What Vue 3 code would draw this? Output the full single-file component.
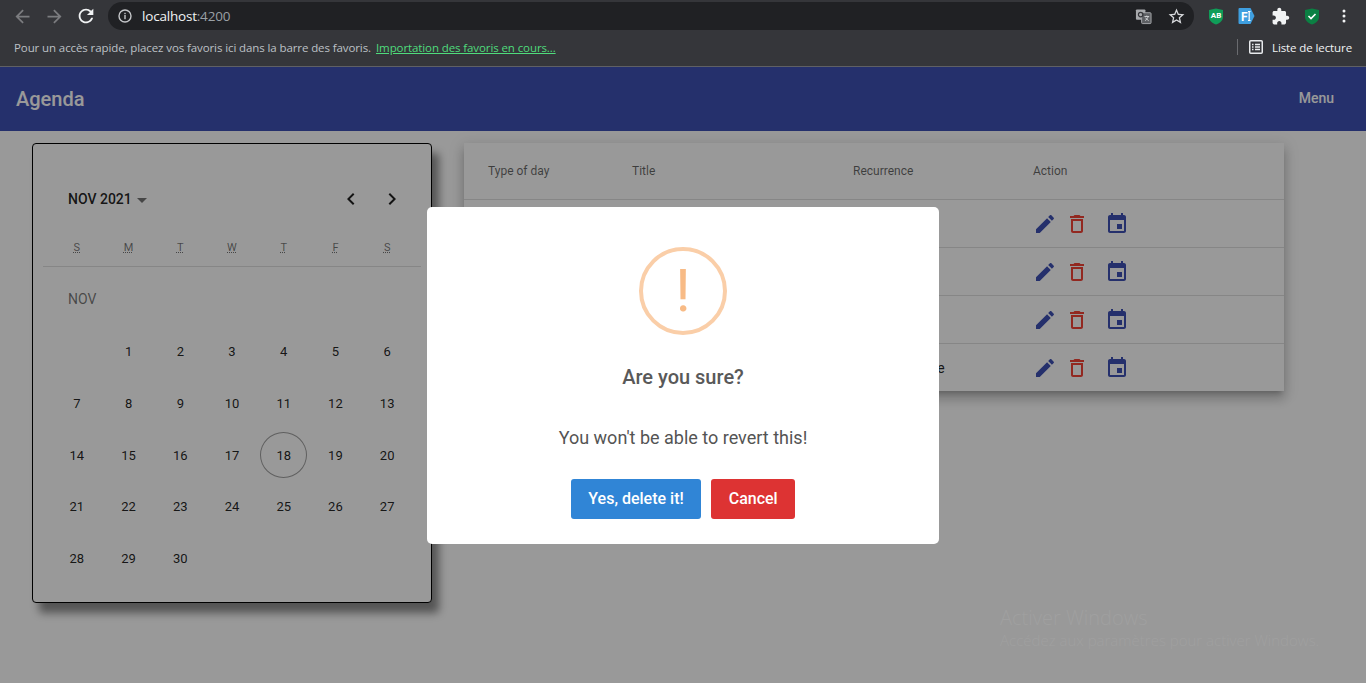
<script setup>
const weekdays = [
  { short: 'S', key: 'sun' },
  { short: 'M', key: 'mon' },
  { short: 'T', key: 'tue' },
  { short: 'W', key: 'wed' },
  { short: 'T', key: 'thu' },
  { short: 'F', key: 'fri' },
  { short: 'S', key: 'sat' }
]

const days = Array.from({ length: 30 }, (_, i) => i + 1)
const today = 18

// Nov 2021 starts on a Monday
const leadingBlanks = 1

const rows = [
  { id: 1, type: '', title: '', recurrence: '' },
  { id: 2, type: '', title: '', recurrence: '' },
  { id: 3, type: '', title: '', recurrence: '' },
  { id: 4, type: '', title: '', recurrence: 'Daily schedule' }
]
</script>

<template>
  <div class="page">
    <!-- Browser chrome -->
    <div class="chrome">
      <div class="toolbar">
        <button class="tool dim">
          <svg viewBox="0 0 24 24" width="21" height="21"><path d="M20 11H7.830l5.590-5.590L12 4l-8 8 8 8 1.410-1.410L7.830 13H20v-2z" /></svg>
        </button>
        <button class="tool dim">
          <svg viewBox="0 0 24 24" width="21" height="21"><path d="M4 11h12.170l-5.590-5.590L12 4l8 8-8 8-1.410-1.410L16.170 13H4v-2z" /></svg>
        </button>
        <button class="tool bright">
          <svg viewBox="0 0 24 24" width="22" height="22"><path d="M17.650 6.350A7.958 7.958 0 0 0 12 4c-4.420 0-7.990 3.580-7.990 8s3.570 8 7.990 8c3.730 0 6.840-2.550 7.730-6h-2.080A5.990 5.990 0 0 1 12 18c-3.310 0-6-2.690-6-6s2.690-6 6-6c1.660 0 3.140.69 4.220 1.780L13 11h7V4l-2.350 2.350z" /></svg>
        </button>

        <div class="omnibox">
          <svg class="info" viewBox="0 0 16 16" width="16" height="16">
            <circle cx="8" cy="8" r="6" fill="none" stroke="#c4c6c9" stroke-width="1.400" />
            <rect x="7.300" y="7" width="1.400" height="4.200" fill="#c4c6c9" />
            <rect x="7.300" y="4.800" width="1.400" height="1.400" fill="#c4c6c9" />
          </svg>
          <span class="url">localhost<span class="url-port">:4200</span></span>
          <button class="tool omni-tool translate">
            <svg viewBox="0 0 18 18" width="17" height="17">
              <rect x="1" y="1.500" width="10" height="11" rx="1" fill="#a8aaad" />
              <rect x="7" y="5" width="10" height="11.500" rx="1" fill="#5d5f63" stroke="#a8aaad" />
              <circle cx="6" cy="7" r="2.400" fill="none" stroke="#35363a" stroke-width="1.200" />
              <path d="M10 9h5M12.500 8v1.500M14 9.500l-3 4M11 10.500l3.500 3" stroke="#d0d2d4" stroke-width="1" fill="none" />
            </svg>
          </button>
          <button class="tool omni-tool">
            <svg viewBox="0 0 24 24" width="19" height="19"><path fill="#d7d9dc" d="M22 9.240l-7.190-.62L12 2 9.190 8.630 2 9.240l5.460 4.730L5.820 21 12 17.270 18.180 21l-1.630-7.030L22 9.240zM12 15.400l-3.760 2.270 1-4.280-3.320-2.880 4.380-.38L12 6.100l1.710 4.040 4.380.38-3.320 2.880 1 4.280L12 15.400z" /></svg>
          </button>
        </div>

        <div class="extensions">
          <button class="tool ext">
            <svg viewBox="0 0 18 18" width="18" height="19">
              <path fill="#0f9d58" d="M2 2.500 9 1l7 1.500v7c0 3.500-3 6.200-7 7.500-4-1.300-7-4-7-7.500z" />
              <text x="9" y="10.500" text-anchor="middle" class="ext-label">AB</text>
            </svg>
          </button>
          <button class="tool ext ext-fi">
            <svg viewBox="0 0 18 18" width="18" height="18">
              <path fill="#3f9fe0" d="M1.500 1h11l4 8-4 8h-11a1 1 0 0 1-1-1V2a1 1 0 0 1 1-1z" />
              <text x="3" y="13.500" class="fi-label">F</text>
              <path d="M10 4.500h2.500M10 13.500h2.500M11.200 4.500v9" stroke="#fff" stroke-width="1.200" fill="none" />
            </svg>
          </button>
          <button class="tool ext ext-puzzle">
            <svg viewBox="0 0 24 24" width="19" height="19"><path fill="#f1f3f4" d="M20.500 11H19V7c0-1.100-.9-2-2-2h-4V3.500C13 2.120 11.880 1 10.500 1S8 2.120 8 3.500V5H4c-1.100 0-1.990.9-1.990 2v3.800H3.500c1.490 0 2.700 1.210 2.700 2.700s-1.210 2.700-2.700 2.700H2V20c0 1.100.9 2 2 2h3.800v-1.500c0-1.490 1.210-2.700 2.700-2.700 1.490 0 2.700 1.210 2.700 2.700V22H17c1.100 0 2-.9 2-2v-4h1.500c1.380 0 2.500-1.120 2.500-2.500S21.880 11 20.500 11z" /></svg>
          </button>
          <button class="tool ext">
            <svg viewBox="0 0 18 18" width="18" height="19">
              <path fill="#0b8043" d="M2 2.500 9 1l7 1.500v7c0 3.500-3 6.200-7 7.500-4-1.300-7-4-7-7.500z" />
              <path d="M5.500 8.500 8 11l4.500-4.500" stroke="#fff" stroke-width="1.600" fill="none" />
            </svg>
          </button>
          <button class="tool ext">
            <svg viewBox="0 0 16 16" width="16" height="16">
              <circle cx="8" cy="3" r="1.500" fill="#f1f3f4" />
              <circle cx="8" cy="8" r="1.500" fill="#f1f3f4" />
              <circle cx="8" cy="13" r="1.500" fill="#f1f3f4" />
            </svg>
          </button>
        </div>
      </div>

      <div class="bookmarks">
        <span class="bm-hint">Pour un accès rapide, placez vos favoris ici dans la barre des favoris.</span>
        <a class="bm-link">Importation des favoris en cours...</a>
        <span class="bm-sep"></span>
        <svg class="bm-icon" viewBox="0 0 14 14" width="14" height="14">
          <rect x="0.750" y="0.750" width="12.500" height="12.500" rx="1" fill="none" stroke="#e8eaed" stroke-width="1.500" />
          <path d="M3 4.500h1.500M3 7h1.500M3 9.500h1.500M6 4.500h5M6 7h5M6 9.500h5" stroke="#e8eaed" stroke-width="1.300" fill="none" />
        </svg>
        <span class="bm-reader">Liste de lecture</span>
      </div>
    </div>

    <!-- App -->
    <div class="app">
      <header class="app-bar">
        <span class="app-title">Agenda</span>
        <button class="menu-btn">Menu</button>
      </header>

      <main class="content">
        <section class="calendar">
          <div class="cal-head">
            <span class="cal-period">NOV 2021</span>
            <span class="cal-caret"></span>
            <button class="cal-nav">
              <svg viewBox="0 0 24 24" width="24" height="24"><path d="M15.410 7.410 14 6l-6 6 6 6 1.410-1.410L10.830 12z" /></svg>
            </button>
            <button class="cal-nav">
              <svg viewBox="0 0 24 24" width="24" height="24"><path d="M10 6 8.590 7.410 13.170 12l-4.580 4.590L10 18l6-6z" /></svg>
            </button>
          </div>

          <div class="cal-grid cal-weekdays">
            <abbr v-for="d in weekdays" :key="d.key" class="weekday">{{ d.short }}</abbr>
          </div>
          <div class="cal-divider"></div>
          <div class="cal-month">NOV</div>

          <div class="cal-grid">
            <span v-for="n in leadingBlanks" :key="'blank' + n"></span>
            <div v-for="day in days" :key="day" class="day">
              <span class="day-num" :class="{ today: day === today }">{{ day }}</span>
            </div>
          </div>
        </section>

        <section class="table-card">
          <table class="events">
            <colgroup>
              <col class="col-type" />
              <col class="col-title" />
              <col class="col-rec" />
              <col class="col-action" />
            </colgroup>
            <thead>
              <tr>
                <th>Type of day</th>
                <th>Title</th>
                <th>Recurrence</th>
                <th>Action</th>
              </tr>
            </thead>
            <tbody>
              <tr v-for="row in rows" :key="row.id">
                <td>{{ row.type }}</td>
                <td>{{ row.title }}</td>
                <td>{{ row.recurrence }}</td>
                <td>
                  <div class="actions">
                    <svg class="act-edit" viewBox="0 0 24 24" width="24" height="24"><path d="M3 17.250V21h3.750L17.810 9.940l-3.750-3.750L3 17.250zM20.710 7.040c.39-.39.39-1.020 0-1.410l-2.340-2.340c-.39-.39-1.020-.39-1.410 0l-1.830 1.830 3.750 3.750 1.830-1.830z" /></svg>
                    <svg class="act-del" viewBox="0 0 24 24" width="24" height="24"><path d="M6 19c0 1.100.9 2 2 2h8c1.100 0 2-.9 2-2V7H6v12zM8 9h8v10H8V9zm7.500-5-1-1h-5l-1 1H5v2h14V4z" /></svg>
                    <svg class="act-event" viewBox="0 0 24 24" width="24" height="24"><path d="M17 12h-5v5h5v-5zM16 1v2H8V1H6v2H5c-1.110 0-1.990.9-1.990 2L3 19c0 1.100.89 2 2 2h14c1.100 0 2-.9 2-2V5c0-1.100-.9-2-2-2h-1V1h-2zm3 18H5V8h14v11z" /></svg>
                  </div>
                </td>
              </tr>
            </tbody>
          </table>
        </section>
      </main>

      <!-- Confirm dialog -->
      <div class="backdrop">
        <div class="dialog">
          <div class="alert-icon"><span class="alert-mark">!</span></div>
          <h2 class="dialog-title">Are you sure?</h2>
          <p class="dialog-text">You won't be able to revert this!</p>
          <div class="dialog-actions">
            <button class="btn btn-confirm">Yes, delete it!</button>
            <button class="btn btn-cancel">Cancel</button>
          </div>
        </div>
      </div>

      <div class="watermark">
        <div class="wm-title">Activer Windows</div>
        <div class="wm-sub">Accédez aux paramètres pour activer Windows.</div>
      </div>
    </div>
  </div>
</template>

<style>
html,
body {
  margin: 0;
  background: #999;
}
</style>

<style scoped>
.page {
  height: 683px;
  overflow: hidden;
  display: flex;
  flex-direction: column;
  font-family: Roboto, "Liberation Sans", sans-serif;
}

button {
  border: none;
  background: none;
  padding: 0;
  font-family: inherit;
}

/* browser chrome */
.chrome {
  height: 67px;
  box-sizing: border-box;
  background: #35363a;
  border-bottom: 1px solid #5f6064;
  flex: none;
}

.toolbar {
  height: 33px;
  box-sizing: border-box;
  padding: 2px 6px 3px;
  display: flex;
  align-items: center;
}

.tool {
  width: 32px;
  height: 28px;
  flex: none;
  display: flex;
  align-items: center;
  justify-content: center;
}

.dim svg {
  fill: #7b7c7f;
}

.bright svg {
  fill: #f1f3f4;
}

.omnibox {
  flex: 1;
  height: 28px;
  margin-left: 6px;
  padding: 0 2px 0 9px;
  border-radius: 14px;
  background: #202124;
  display: flex;
  align-items: center;
}

.info {
  flex: none;
}

.url {
  flex: 1;
  margin-left: 9px;
  font-family: "Open Sans", sans-serif;
  font-size: 13.500px;
  letter-spacing: -0.200px;
  color: #f1f3f4;
}

.url-port {
  color: #9aa0a6;
}

.translate {
  margin-right: 1px;
  width: 31px;
}

.extensions {
  margin-left: 6px;
  display: flex;
}

.ext-label {
  font: 700 8px Roboto, sans-serif;
  fill: #fff;
}

.fi-label {
  font: 700 12px Roboto, sans-serif;
  fill: #fff;
}

.ext-fi {
  margin-left: -1px;
}

.ext-puzzle {
  margin-left: 1px;
}

.bookmarks {
  height: 33px;
  box-sizing: border-box;
  padding: 0 14px 5px;
  display: flex;
  align-items: center;
  font-family: "Open Sans", sans-serif;
  font-size: 11.500px;
  letter-spacing: -0.100px;
}

.bm-hint {
  color: #bdc1c6;
}

.bm-link {
  margin-left: 5px;
  color: #4fdc7c;
  text-decoration: underline;
}

.bm-sep {
  width: 1px;
  height: 16px;
  margin-left: auto;
  background: #6a6b6f;
}

.bm-icon {
  margin: 0 9px 0 11px;
}

.bm-reader {
  color: #f1f3f4;
}

/* app */
.app {
  position: relative;
  flex: 1;
  background: #fff;
}

.app-bar {
  height: 64px;
  padding: 0 16px;
  display: flex;
  align-items: center;
  justify-content: space-between;
  background: #3f51b5;
  color: #fff;
}

.app-title {
  font-size: 20px;
  font-weight: 500;
}

.menu-btn {
  padding: 0 16px 2px;
  height: 36px;
  color: #fff;
  font-size: 14px;
  font-weight: 500;
}

.content {
  padding: 12px 32px;
  display: flex;
  align-items: flex-start;
  gap: 32px;
}

/* calendar */
.calendar {
  width: 400px;
  height: 460px;
  box-sizing: border-box;
  border: 1px solid #000;
  border-radius: 4px;
  background: #fff;
  box-shadow: 7px 10px 9px rgba(0, 0, 0, 0.45);
  flex: none;
}

.cal-head {
  height: 40px;
  margin-top: 35px;
  padding: 0 19px 0 35px;
  display: flex;
  align-items: center;
}

.cal-period {
  font-size: 14px;
  font-weight: 500;
  color: rgba(0, 0, 0, 0.87);
}

.cal-caret {
  width: 0;
  height: 0;
  margin: 2px auto 0 5px;
  border-left: 5px solid transparent;
  border-right: 5px solid transparent;
  border-top: 5px solid rgba(0, 0, 0, 0.54);
}

.cal-nav {
  width: 40px;
  height: 40px;
  margin-left: 1px;
  display: flex;
  align-items: center;
  justify-content: center;
}

.cal-nav svg {
  fill: rgba(0, 0, 0, 0.87);
}

.cal-grid {
  width: 362px;
  margin-left: 18px;
  display: grid;
  grid-template-columns: repeat(7, 1fr);
}

.cal-weekdays {
  height: 14px;
  margin-top: 22px;
}

.weekday {
  justify-self: center;
  height: 14px;
  font-size: 11px;
  line-height: 14px;
  color: rgba(0, 0, 0, 0.54);
  text-decoration: underline dotted;
}

.cal-divider {
  height: 1px;
  margin: 11px 10px 0;
  background: rgba(0, 0, 0, 0.12);
}

.cal-month {
  height: 20px;
  padding: 22px 0 17px 35px;
  font-size: 14px;
  line-height: 20px;
  font-weight: 400;
  color: rgba(0, 0, 0, 0.54);
}

.day {
  height: 51.700px;
  display: flex;
  align-items: center;
  justify-content: center;
}

.day-num {
  width: 47px;
  height: 46px;
  box-sizing: border-box;
  border: 1px solid transparent;
  border-radius: 50%;
  display: flex;
  align-items: center;
  justify-content: center;
  font-size: 13px;
  color: rgba(0, 0, 0, 0.87);
}

.today {
  border-color: rgba(0, 0, 0, 0.38);
}

/* table */
.table-card {
  width: 820px;
  background: #fff;
  box-shadow: 0 5px 5px -3px rgba(0, 0, 0, 0.2), 0 8px 10px 1px rgba(0, 0, 0, 0.14), 0 3px 14px 2px rgba(0, 0, 0, 0.12);
}

.events {
  width: 100%;
  table-layout: fixed;
  border-collapse: collapse;
}

.col-type {
  width: 168px;
}

.col-title {
  width: 221px;
}

.col-rec {
  width: 180px;
}

.events th,
.events td {
  padding: 0;
  border-bottom: 1px solid rgba(0, 0, 0, 0.12);
  text-align: left;
  white-space: nowrap;
}

.events tr:last-child td {
  border-bottom: none;
}

.events th:first-child,
.events td:first-child {
  padding-left: 24px;
}

.events th {
  height: 56px;
  font-size: 12px;
  font-weight: 400;
  color: rgba(0, 0, 0, 0.6);
}

.events td {
  height: 47px;
  font-size: 14px;
  letter-spacing: 0.150px;
  color: rgba(0, 0, 0, 0.87);
}

.actions {
  display: flex;
  align-items: center;
}

.act-edit {
  margin-right: 8px;
  fill: #3f51b5;
}

.act-del {
  margin-right: 16px;
  fill: #f44336;
}

.act-event {
  fill: #3f51b5;
}

/* dialog */
.backdrop {
  position: absolute;
  inset: 0;
  background: rgba(0, 0, 0, 0.4);
  display: flex;
  align-items: center;
  justify-content: center;
}

.dialog {
  width: 512px;
  height: 337px;
  box-sizing: border-box;
  padding-top: 40px;
  border-radius: 5px;
  background: #fff;
  display: flex;
  flex-direction: column;
  align-items: center;
}

.alert-icon {
  width: 88px;
  height: 88px;
  box-sizing: border-box;
  border: 4px solid #facea8;
  border-radius: 50%;
  display: flex;
  justify-content: center;
  flex: none;
}

.alert-mark {
  font-size: 60px;
  line-height: 80px;
  font-weight: 400;
  color: #f8bb86;
}

.dialog-title {
  margin: 30px 0 0;
  font-size: 20px;
  line-height: 24px;
  font-weight: 500;
  color: #595959;
}

.dialog-text {
  margin: 37px 0 0;
  font-size: 18px;
  line-height: 24px;
  font-weight: 400;
  color: #545454;
}

.dialog-actions {
  margin-top: 29px;
  display: flex;
  gap: 10px;
}

.btn {
  height: 40px;
  padding: 0 17.500px;
  border-radius: 3px;
  color: #fff;
  font-size: 16px;
  font-weight: 500;
}

.btn-confirm {
  background: #3085d6;
}

.btn-cancel {
  background: #dd3333;
}

/* Windows activation text */
.watermark {
  position: absolute;
  left: 1000px;
  top: 538px;
  font-family: "Open Sans", sans-serif;
  color: #a0a0a0;
}

.wm-title {
  font-size: 20px;
  font-weight: 300;
  line-height: 26px;
}

.wm-sub {
  margin-top: -1px;
  font-size: 15px;
  font-weight: 300;
  line-height: 20px;
}
</style>
